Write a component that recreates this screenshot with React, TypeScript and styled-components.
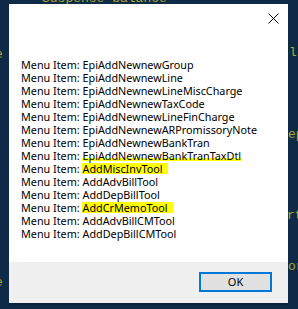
import React from 'react';
import styled, { createGlobalStyle } from 'styled-components';

const GlobalStyle = createGlobalStyle`
  html, body {
    margin: 0;
    padding: 0;
    background: #0e2a47;
  }
`;

type Item = { label: string; mark?: 'full' | 'under' };

const items: Item[] = [
  { label: 'EpiAddNewnewGroup' },
  { label: 'EpiAddNewnewLine' },
  { label: 'EpiAddNewnewLineMiscCharge' },
  { label: 'EpiAddNewnewTaxCode' },
  { label: 'EpiAddNewnewLineFinCharge' },
  { label: 'EpiAddNewnewARPromissoryNote' },
  { label: 'EpiAddNewnewBankTran' },
  { label: 'EpiAddNewnewBankTranTaxDtl', mark: 'under' },
  { label: 'AddMiscInvTool', mark: 'full' },
  { label: 'AddAdvBillTool' },
  { label: 'AddDepBillTool' },
  { label: 'AddCrMemoTool', mark: 'full' },
  { label: 'AddAdvBillCMTool' },
  { label: 'AddDepBillCMTool' },
];

// bits of the editor text showing around the dialog
const behind = [
  { text: 'Suspense balance', x: 42, y: -9 },
  { text: 'e', x: -5, y: 47 },
  { text: 'l (', x: 289, y: 45 },
  { text: 'ep', x: 288, y: 127 },
  { text: 'rts', x: 287, y: 208 },
  { text: 'or', x: 288, y: 259 },
  { text: 'e', x: -5, y: 275 },
];

const Page = styled.div`
  position: relative;
  width: 298px;
  height: 309px;
  overflow: hidden;
  background: #0e2a47;
  padding: 4px 0 0 9px;
  box-sizing: border-box;
`;

const BehindText = styled.span`
  position: absolute;
  font-family: 'Liberation Mono', monospace;
  font-size: 13px;
  line-height: 16px;
  color: #a9ab2f;
  white-space: pre;
`;

const Dialog = styled.div`
  position: relative;
  width: 279px;
  height: 299px;
  display: flex;
  flex-direction: column;
  font-family: 'Noto Sans', 'Open Sans', sans-serif;
  box-shadow: 0 2px 0 #0a223b;
`;

const Body = styled.div`
  flex: 1;
  background: #ffffff;
  display: flex;
  flex-direction: column;
`;

const TitleRow = styled.div`
  height: 36px;
  display: flex;
  justify-content: flex-end;
  align-items: flex-start;
`;

const CloseButton = styled.div`
  width: 30px;
  height: 28px;
  display: flex;
  align-items: center;
  justify-content: center;
`;

const Message = styled.div`
  padding: 18px 0 0 12px;
  display: flex;
  flex-direction: column;
`;

const Line = styled.div`
  height: 13px;
  font-size: 10.8px;
  line-height: 13px;
  color: #000000;
  white-space: nowrap;
`;

const Mark = styled.span<{ $mark?: 'full' | 'under' }>`
  display: inline-block;
  line-height: 11px;
  height: 11px;
  vertical-align: baseline;
  padding-right: ${(p) => (p.$mark === 'full' ? '5px' : '0')};
  background: ${(p) =>
    p.$mark === 'full'
      ? '#ffff00'
      : p.$mark === 'under'
      ? 'linear-gradient(to top, #ffff00 3px, transparent 3px)'
      : 'transparent'};
`;

const Footer = styled.div`
  height: 41px;
  background: #f0f0f0;
  display: flex;
  justify-content: flex-end;
  align-items: flex-start;
  padding: 10px 16px 0 0;
  box-sizing: border-box;
`;

const OkButton = styled.button`
  width: 73px;
  height: 20px;
  box-sizing: border-box;
  border: 2px solid #0078d7;
  background: #e1e1e1;
  font-family: 'Noto Sans', 'Open Sans', sans-serif;
  font-size: 11px;
  line-height: 14px;
  color: #000000;
  padding: 0;
`;

const App = () => (
  <>
    <GlobalStyle />
    <Page>
      {behind.map((b, i) => (
        <BehindText key={i} style={{ left: b.x, top: b.y }}>
          {b.text}
        </BehindText>
      ))}
      <Dialog>
        <Body>
          <TitleRow>
            <CloseButton>
              <svg width="11" height="11" viewBox="0 0 11 11">
                <path d="M0.5 0.5 L10.5 10.5 M10.5 0.5 L0.5 10.5" stroke="#000" strokeWidth="1" fill="none" />
              </svg>
            </CloseButton>
          </TitleRow>
          <Message>
            {items.map((it) => (
              <Line key={it.label}>
                Menu Item: <Mark $mark={it.mark}>{it.label}</Mark>
              </Line>
            ))}
          </Message>
        </Body>
        <Footer>
          <OkButton>OK</OkButton>
        </Footer>
      </Dialog>
    </Page>
  </>
);

export default App;
